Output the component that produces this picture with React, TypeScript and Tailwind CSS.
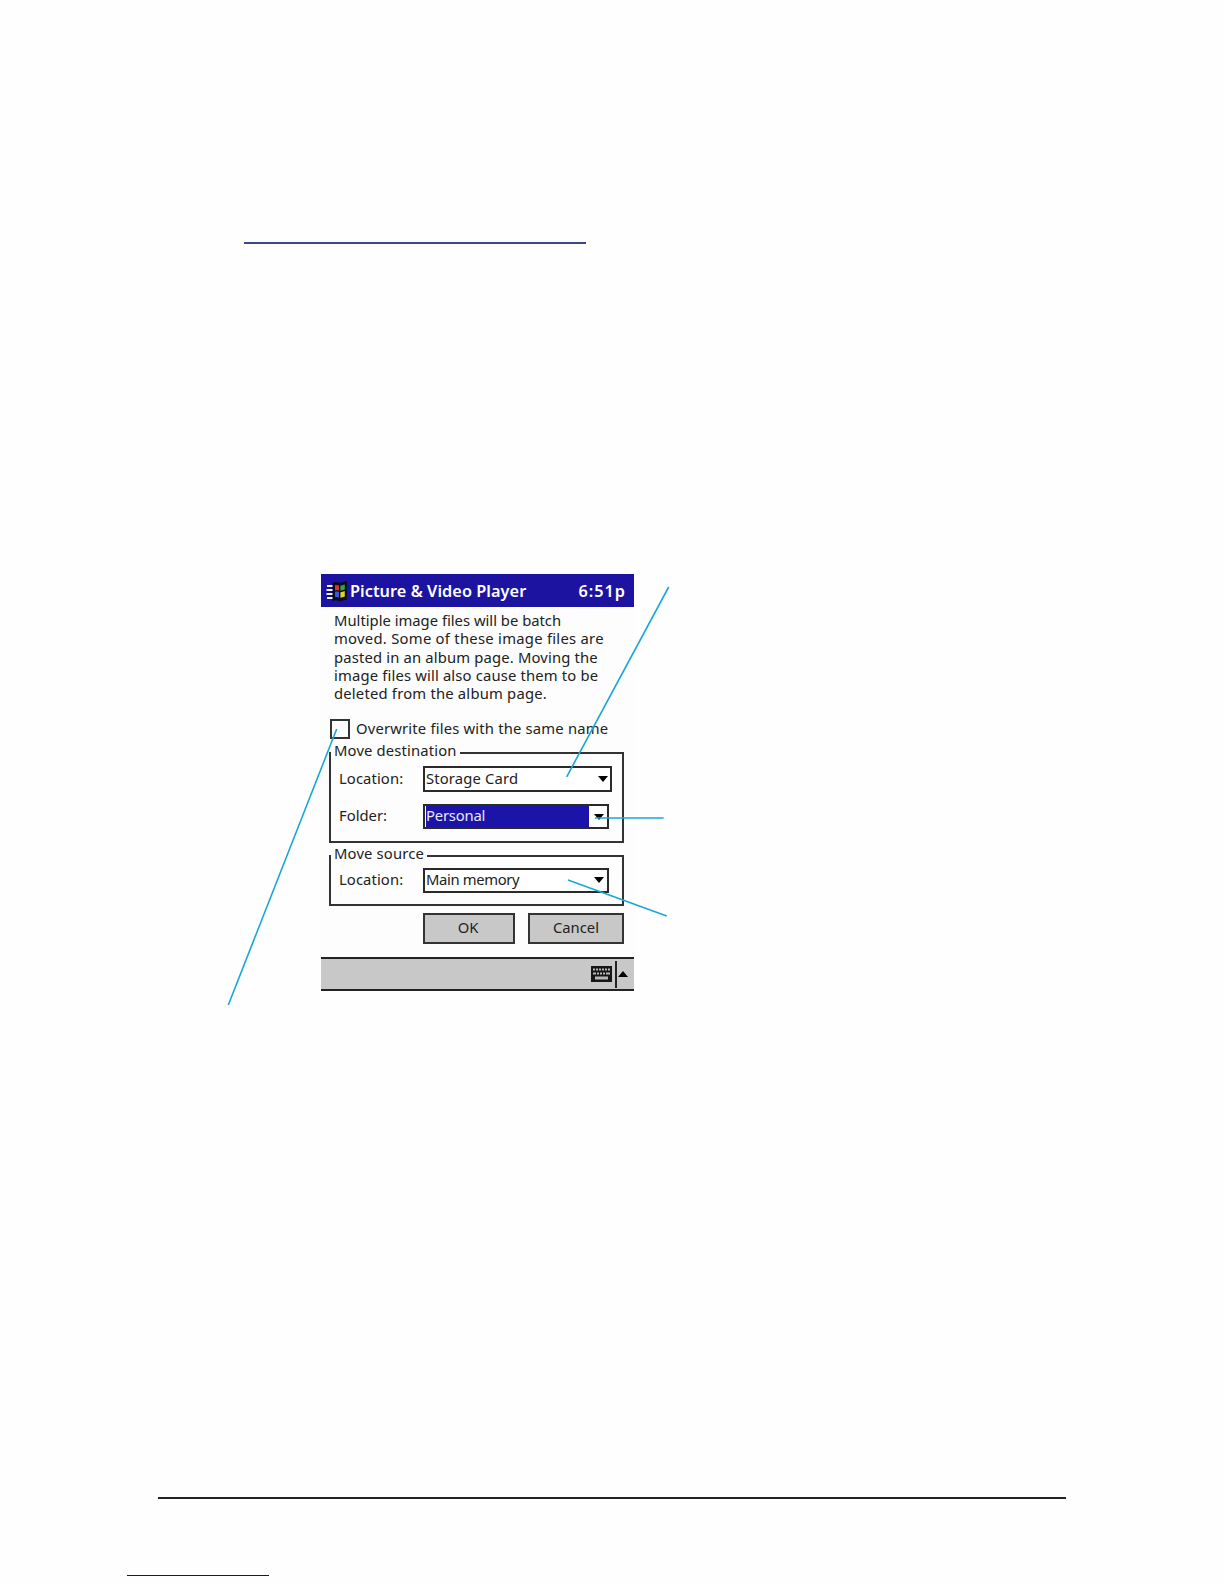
function Caret({ className = "" }: { className?: string }) {
  return (
    <svg width="10" height="6" viewBox="0 0 10 6" className={className}>
      <path d="M0 0H10L5 6Z" fill="#000" />
    </svg>
  );
}

function Select({
  text,
  w,
  h,
  caret,
  textClass = "",
  selected,
}: {
  text: string;
  w: string;
  h: string;
  caret: string;
  textClass?: string;
  selected?: boolean;
}) {
  return (
    <div className={`flex items-center border-2 border-[#2a2a2a] bg-white pl-px ${w} ${h}`}>
      {selected ? (
        <span className={`flex h-[21px] w-[163px] shrink-0 items-center bg-[#1c14a8] text-[#e8e8f8] ${textClass}`}>{text}</span>
      ) : (
        <span className={`flex-1 ${textClass}`}>{text}</span>
      )}
      <span className={`ml-auto flex shrink-0 justify-center ${caret}`}>
        <Caret />
      </span>
    </div>
  );
}

function Legend({ children }: { children: string }) {
  return (
    <span className="absolute left-[0px] top-[-14px] bg-[#fcfdfc] pl-[3px] pr-[3px] leading-[20px] tracking-[0.15px]">{children}</span>
  );
}

function Logo() {
  return (
    <svg width="21" height="21" viewBox="0 0 21 21">
      <path d="M7 2.5C10 0.5 12 2.5 14 2.5C16 2.5 18 1 20.5 1V18C18 18 16 19.5 14 19.5C12 19.5 10 17.5 7 19Z" fill="#0b0b22" stroke="#0b0b22" strokeWidth="1.4" />
      <path d="M1 5H6.5M0.5 9H6.5M0.5 13H6.5M1 17H6.5" stroke="#f0f0f0" strokeWidth="1.8" />
      <path d="M1 7H6.5M1 11H6.5M1 15H6.5" stroke="#0b0b22" strokeWidth="1.2" />
      <path d="M9 4.2C10.5 3.8 11.5 4.2 13 4.5V9.6C11.5 9.2 10.5 9 9 9.4Z" fill="#d8342a" />
      <path d="M14.4 4.6C16 4.6 17.4 3.8 18.8 3.4V8.6C17.4 9 16 9.6 14.4 9.8Z" fill="#2fa838" />
      <path d="M9 10.8C10.5 10.4 11.5 10.6 13 11V16.6C11.5 16.2 10.5 15.9 9 16.3Z" fill="#2f5ce0" />
      <path d="M14.4 11.2C16 11 17.4 10.4 18.8 10V15.4C17.4 15.8 16 16.4 14.4 16.8Z" fill="#e8cf20" />
    </svg>
  );
}

function Keyboard() {
  return (
    <svg width="21" height="16" viewBox="0 0 21 16">
      <rect width="21" height="16" fill="#161616" />
      <path d="M2 2.5h2v2H2zM5 2.5h2v2H5zM8 2.5h2v2H8zM11 2.5h2v2h-2zM14 2.5h2v2h-2zM17 2.5h2v2h-2zM2 6.5h3v2H2zM6 6.5h2v2H6zM9 6.5h2v2H9zM12 6.5h2v2h-2zM15 6.5h4v2h-4zM4 10.5h13v3H4z" fill="#b8b8b8" />
    </svg>
  );
}

export default function App() {
  return (
    <div className="h-[1584px] w-[1224px] overflow-hidden bg-[#fefefe] pt-[242px] font-['Noto_Sans',sans-serif] text-[14.8px] text-[#222]">
      <div className="relative">
        <div className="ml-[244px] h-[1.5px] w-[342px] bg-[#3a4a86]" />

        <div className="ml-[321px] mt-[330.5px] flex h-[417px] w-[313px] flex-col bg-[#fcfdfc]">
          <div className="flex h-[33px] shrink-0 items-center justify-between bg-[#1c14a0] pl-[5px] pr-[8px] pt-[1px] text-[16.3px] font-semibold text-white">
            <div className="flex items-center gap-[3px]">
              <Logo />
              <span className="tracking-[0.05px]">Picture &amp; Video Player</span>
            </div>
            <span className="tracking-[1px]">6:51p</span>
          </div>

          <p className="ml-[13px] mt-[4px] whitespace-nowrap leading-[18.3px]">
            <span className="block">Multiple image files will be batch</span>
            <span className="block tracking-[0.27px]">moved. Some of these image files are</span>
            <span className="block tracking-[0.16px]">pasted in an album page. Moving the</span>
            <span className="block tracking-[0.16px]">image files will also cause them to be</span>
            <span className="block tracking-[0.2px]">deleted from the album page.</span>
          </p>

          <div className="ml-[9px] mt-[16.5px] flex h-[20px] items-center">
            <div className="h-[20px] w-[20px] shrink-0 border-2 border-[#333]" />
            <span className="ml-[6px] whitespace-nowrap pb-[2px] tracking-[0.18px]">Overwrite files with the same name</span>
          </div>

          <div className="relative ml-[8px] mt-[13px] flex h-[91px] w-[295px] flex-col gap-[12px] border-2 border-[#333] pl-[8px] pt-[12px]">
            <Legend>Move destination</Legend>
            <div className="flex items-center">
              <span className="w-[84px] pb-[1px] tracking-[0.1px]">Location:</span>
              <Select text="Storage Card" w="w-[189px]" h="h-[26px]" caret="w-[15px]" textClass="pb-[1px] tracking-[0.15px]" />
            </div>
            <div className="flex items-center">
              <span className="w-[84px] pb-[3px]">Folder:</span>
              <Select text="Personal" w="w-[186px]" h="h-[25px]" caret="w-[20px]" textClass="pb-[3px] tracking-[-0.2px]" selected />
            </div>
          </div>

          <div className="relative ml-[8px] mt-[12px] flex h-[51px] w-[295px] items-center border-2 border-[#333] pl-[8px]">
            <Legend>Move source</Legend>
            <span className="w-[84px] pb-[3px] tracking-[0.1px]">Location:</span>
            <Select text="Main memory" w="w-[186px]" h="h-[25px]" caret="w-[16px]" textClass="pb-[3px] tracking-[-0.35px]" />
          </div>

          <div className="ml-[102px] mt-[7px] flex gap-[13px]">
            <button className="h-[31px] w-[92px] border-2 border-[#333] bg-[#c8c8c8] pb-[2px] pr-[2px]">OK</button>
            <button className="h-[31px] w-[96px] border-2 border-[#333] bg-[#c8c8c8] pb-[2px]">Cancel</button>
          </div>

          <div className="mt-auto flex h-[34px] items-center justify-end border-y-2 border-[#222] bg-[#c8c8c8]">
            <Keyboard />
            <div className="ml-[3px] h-[27px] w-[2px] bg-[#222]" />
            <Caret className="ml-[1px] mr-[6px] rotate-180" />
          </div>
        </div>

        <div className="ml-[158px] mt-[506px] h-[2px] w-[908px] bg-[#222]" />
        <div className="ml-[127px] mt-[76px] h-px w-[142px] bg-[#10107a]" />

        <svg className="absolute left-0 top-[-242px]" width="1224" height="1584" fill="none" stroke="#1aa6d8" strokeWidth="1.6">
          <path d="M668.7 587L566.7 776.8" />
          <path d="M663.6 818H595" />
          <path d="M666.7 916L568 880" />
          <path d="M228.3 1005L336.7 729" />
        </svg>
      </div>
    </div>
  );
}
